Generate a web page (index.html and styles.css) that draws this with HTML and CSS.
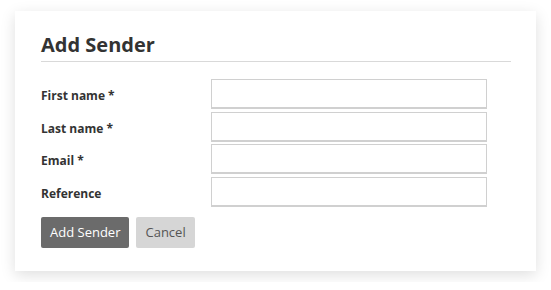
FILE: index.html
```html
<!DOCTYPE html>
<html lang="en">
  <head>
    <meta charset="UTF-8" />
    <title>Add Sender</title>
    <link rel="stylesheet" href="styles.css">
  </head>
  <body>
    <div class="modal">
      <h1>Add Sender</h1>

      <form class="sender-form">
        <div class="form-row">
          <label for="first-name">First name *</label>
          <input id="first-name" type="text" />
        </div>
        <div class="form-row">
          <label for="last-name">Last name *</label>
          <input id="last-name" type="text" />
        </div>
        <div class="form-row">
          <label for="email">Email *</label>
          <input id="email" type="email" />
        </div>
        <div class="form-row">
          <label for="reference">Reference</label>
          <input id="reference" type="text" />
        </div>

        <div class="buttons">
          <button type="submit" class="btn btn-primary">Add Sender</button>
          <button type="button" class="btn btn-secondary">Cancel</button>
        </div>
      </form>
    </div>
  </body>
</html>
```

FILE: styles.css
```css
:root {
  --dark-text: #333333;
  --border: #d0d0d0;
  --rule: #d9d9d9;
  --btn-dark: #6b6b6b;
  --btn-light: #d6d6d6;
}

* {
  box-sizing: border-box;
  margin: 0;
  padding: 0;
}

body {
  font-family: "Open Sans", sans-serif;
  background: #ffffff;
  color: var(--dark-text);
  padding: 11px 15px;
}

.modal {
  width: 521px;
  height: 260px;
  background: #ffffff;
  box-shadow: 0 4px 14px rgba(0, 0, 0, 0.13);
  padding: 20px 25px 0 26px;
}

h1 {
  font-size: 20px;
  font-weight: 700;
  line-height: 28px;
  padding-bottom: 2px;
  border-bottom: 1px solid var(--rule);
  margin-bottom: 17px;
}

.form-row {
  display: grid;
  grid-template-columns: 170px 276px;
  align-items: center;
  margin-bottom: 2.5px;
}

.form-row label {
  font-size: 12px;
  font-weight: 700;
  padding-top: 3px;
}

.form-row input {
  height: 30px;
  border: 1px solid var(--border);
  border-width: 1px 1px 2px 1px;
  background: #ffffff;
  font-family: inherit;
  font-size: 13px;
  padding: 0 8px;
  outline: none;
}

.buttons {
  display: flex;
  gap: 7px;
  margin-top: 10px;
}

.btn {
  height: 31px;
  padding: 0 9px;
  border: none;
  border-radius: 2px;
  font-family: inherit;
  font-size: 13px;
  cursor: pointer;
}

.btn-primary {
  background: var(--btn-dark);
  color: #ffffff;
}

.btn-secondary {
  background: var(--btn-light);
  color: #555555;
}
```
